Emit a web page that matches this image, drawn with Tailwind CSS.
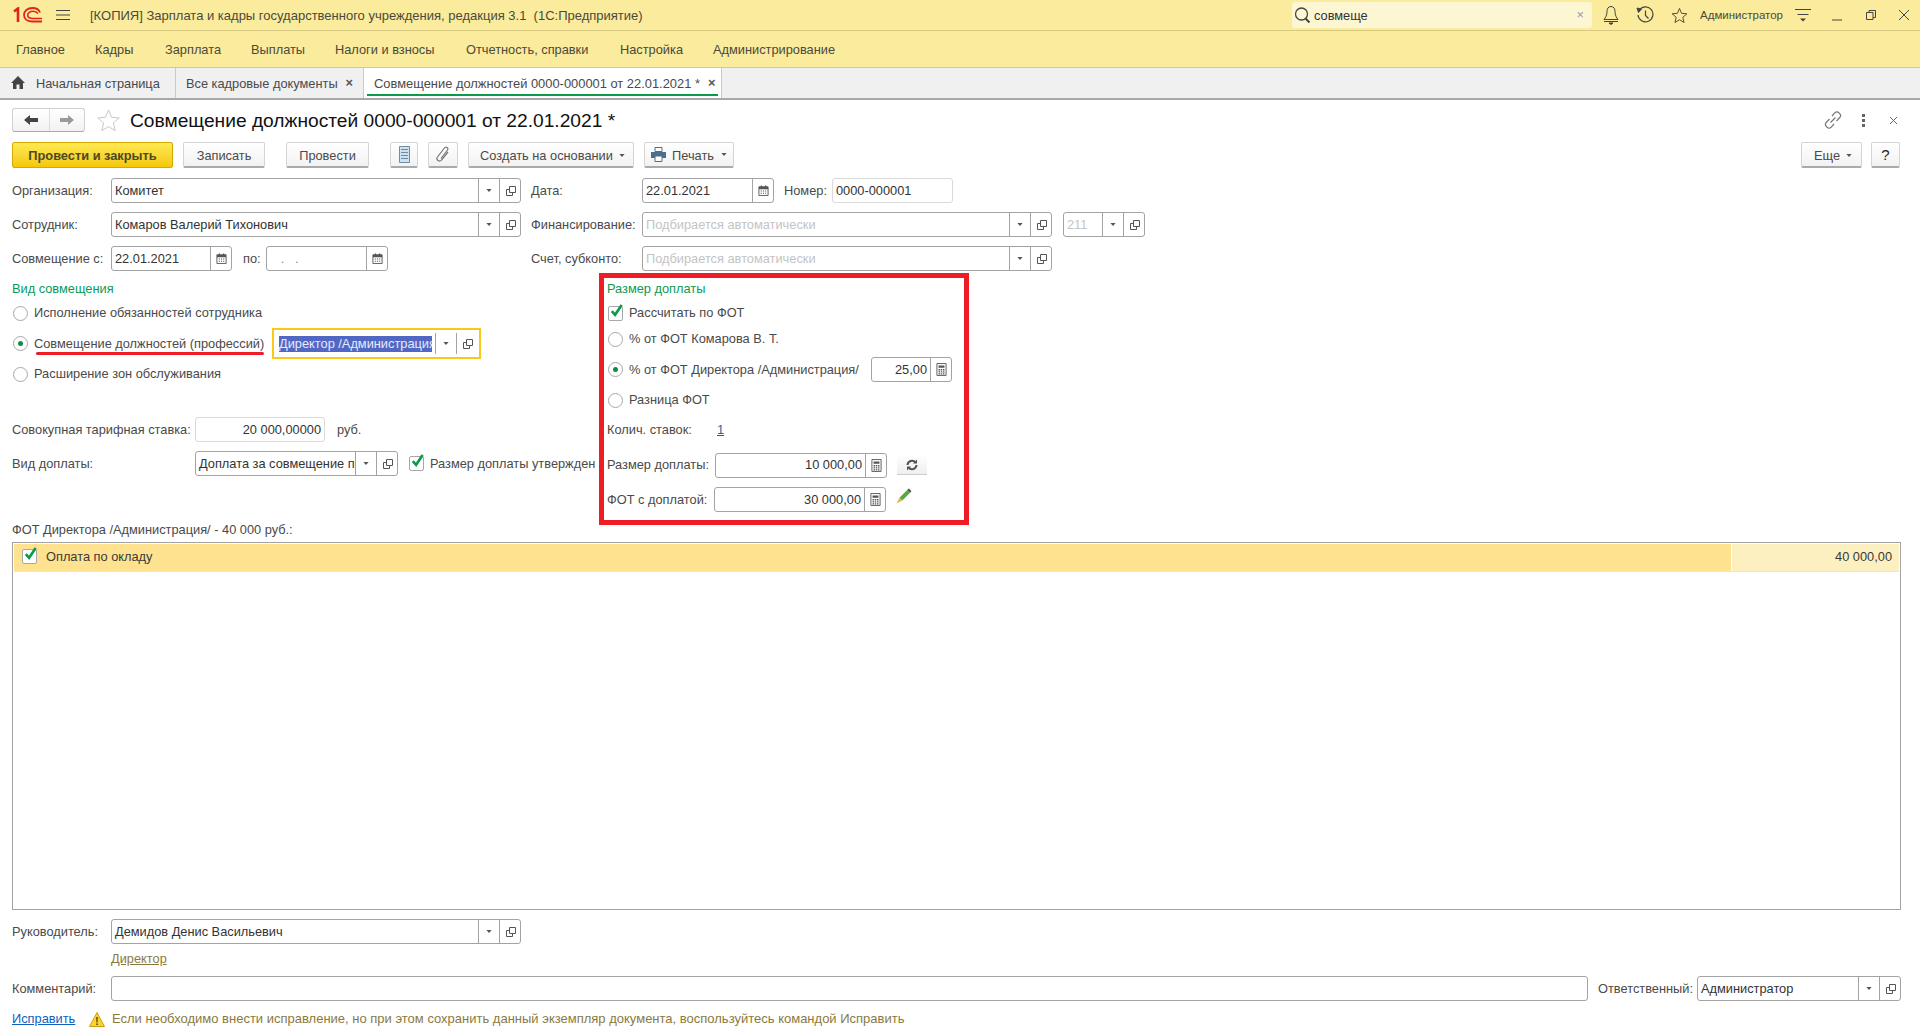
<!doctype html>
<html lang="ru">
<head>
<meta charset="utf-8">
<script src="https://cdn.jsdelivr.net/npm/@tailwindcss/browser@4"></script>
<title>Совмещение должностей</title>
</head>
<body class="w-[1920px] h-[1036px] overflow-hidden bg-white font-['Liberation_Sans',Arial,sans-serif] text-[12.8px] leading-[14px] text-[#4a4a4a]">
<svg class="hidden" width="0" height="0">
  <defs>
    <symbol id="open" viewBox="-1 0 12 12"><path d="M4.500 1.500h6v6h-6zM4.500 4.500h-3v6h6v-3" fill="none" stroke="#555" stroke-width="1"/></symbol>
    <symbol id="arrow" viewBox="0 0 7 4"><path d="M0 0h7L3.500 4z" fill="#555"/></symbol>
    <symbol id="cal" viewBox="0 0 12 12"><path d="M1 2h10v9.500H1z" fill="#fff" stroke="#555"/><path d="M1 2h10v2.500H1zM3 .5h1.500V2H3zM7.500 .5H9V2H7.500z" fill="#555"/><path d="M3 6h1.200v1.200H3zM5.400 6h1.200v1.200H5.400zM7.800 6H9v1.200H7.800zM3 8.400h1.200v1.200H3zM5.400 8.400h1.200v1.200H5.400zM7.800 8.400H9v1.200H7.800z" fill="#555"/></symbol>
    <symbol id="calc" viewBox="0 0 12 14"><path d="M1 .5h10v13H1z" fill="#fff" stroke="#555"/><path d="M2.800 2.500h6.400v2.500H2.800zM2.800 6.500h1.600v1.500H2.800zM5.200 6.500h1.600v1.500H5.200zM7.600 6.500h1.600v1.500H7.600zM2.800 8.800h1.600v1.500H2.800zM5.200 8.800h1.600v1.500H5.200zM7.600 8.800h1.600v1.500H7.600zM2.800 11h1.600v1.500H2.800zM5.200 11h1.600v1.500H5.200zM7.600 11h1.600v1.500H7.600z" fill="#555"/></symbol>
    <symbol id="check" viewBox="0 0 16 16"><path d="M3 7.500l3.500 4L13.500 1" fill="none" stroke="#0a9a4a" stroke-width="2.800"/></symbol>
  </defs>
</svg>

<div class="flex h-[1036px] flex-col">
  <!-- top bar -->
  <header class="flex h-[31px] shrink-0 items-center border-b border-[#d8c981] bg-[#fbeb9d] text-[#4a4a3a]">
    <svg class="ml-[13px] h-[16px] w-[30px]" viewBox="0 0 30 16" fill="none" stroke="#e0231c">
      <path d="M1 4.500L5 1.500V15" stroke-width="2.600"/>
      <path d="M27 5.500C26 2.500 23 1 19.500 1 14.500 1 11 4 11 8s3.500 6.500 8.500 6.500H29" stroke-width="1.800"/>
      <path d="M25 6.500C24 5 22 4.300 20 4.300 17 4.300 14.700 5.800 14.700 8S17 11.500 20 11.500H29" stroke-width="1.600"/>
    </svg>
    <svg class="ml-[13px] h-[12px] w-[14px]" viewBox="0 0 14 12" stroke="#444"><path d="M0 1.500h14M0 6h14M0 10.500h14"/></svg>
    <span class="ml-[20px] whitespace-pre pt-[1px] text-[13px]">[КОПИЯ] Зарплата и кадры государственного учреждения, редакция 3.1  (1С:Предприятие)</span>
    <div class="flex-1"></div>
    <div class="flex h-[26px] w-[300px] items-center rounded-[3px] bg-[#fdf6d3] pl-[2px] text-[#333]">
      <svg class="h-[17px] w-[17px]" viewBox="0 0 17 17" fill="none" stroke="#444" stroke-width="1.300"><circle cx="7.500" cy="7" r="6"/><path d="M11.500 11.500l4 4" stroke-width="2"/></svg>
      <span class="ml-[3px] pt-[1px]">совмеще</span>
      <span class="ml-auto mr-[8px] text-[#999]">×</span>
    </div>
    <div class="ml-[2px] flex h-[30px] w-[34px] items-center justify-center">
      <svg class="h-[20px] w-[16px]" viewBox="0 0 16 20" fill="none" stroke="#444"><path d="M8 1.500c-3 0-4 2.500-4 5 0 4-1.500 6-3 8h14c-1.500-2-3-4-3-8 0-2.500-1-5-4-5zM1 16.500h14"/><path d="M6 18h4l-2 1.500z" fill="#444"/></svg>
    </div>
    <div class="flex h-[30px] w-[34px] items-center justify-center">
      <svg class="h-[18px] w-[18px]" viewBox="0 0 18 18" fill="none" stroke="#444"><path d="M3 4.500A7.500 7.500 0 1 1 2 9M9.500 4.500V9.500l3 3" stroke-width="1.200"/><path d="M1 2l4.500 1-3 3.500z" fill="#444"/></svg>
    </div>
    <div class="flex h-[30px] w-[34px] items-center justify-center">
      <svg class="h-[17px] w-[17px]" viewBox="0 0 18 18" fill="none" stroke="#444"><path d="M9 1.500l2.200 5.200 5.600.5-4.300 3.700 1.300 5.500L9 13.500l-4.800 2.900 1.300-5.500L1.200 7.200l5.600-.5z"/></svg>
    </div>
    <span class="ml-[4px] w-[82px] whitespace-nowrap text-[11.500px]">Администратор</span>
    <div class="ml-[4px] flex h-[30px] w-[34px] items-center justify-center">
      <svg class="h-[14px] w-[16px]" viewBox="0 0 16 14" stroke="#444"><path d="M0 1.500h16M2.500 6.500h11"/><path d="M5 10.500h6L8 13.500z" fill="#444" stroke="none"/></svg>
    </div>
    <div class="flex h-[30px] w-[34px] items-center justify-center">
      <svg class="h-[12px] w-[10px]" viewBox="0 0 10 12" stroke="#444"><path d="M0 11h10"/></svg>
    </div>
    <div class="flex h-[30px] w-[34px] items-center justify-center">
      <svg class="h-[10px] w-[10px]" viewBox="0 0 10 10" fill="none" stroke="#444"><path d="M.5 2.500h6.500v7H.5zM3 2.500V.5h6.500v7H7"/></svg>
    </div>
    <div class="flex h-[30px] w-[32px] items-center justify-center">
      <svg class="h-[12px] w-[12px]" viewBox="0 0 12 12" stroke="#444"><path d="M1 1l10 10M11 1L1 11"/></svg>
    </div>
  </header>

  <!-- menu -->
  <nav class="flex h-[37px] shrink-0 items-center border-b border-[#d8c981] bg-[#fbeb9d] pl-[16px] pt-[2px] text-[#4a4a3a]">
    <span class="w-[79px]">Главное</span>
    <span class="w-[70px]">Кадры</span>
    <span class="w-[86px]">Зарплата</span>
    <span class="w-[84px]">Выплаты</span>
    <span class="w-[131px]">Налоги и взносы</span>
    <span class="w-[154px]">Отчетность, справки</span>
    <span class="w-[93px]">Настройка</span>
    <span>Администрирование</span>
  </nav>

  <!-- tabs -->
  <div class="flex h-[32px] shrink-0 border-b-2 border-[#a8a8a8] bg-[#f0f0f0] text-[#4a4a4a]">
    <div class="flex w-[176px] items-center border-r border-[#c9c9c9] pl-[11px]">
      <svg class="h-[13px] w-[14px] -mt-[1px]" viewBox="0 0 14 13" fill="#444"><path d="M7 0L0 7h2v6h3.500V8.500h3V13H12V7h2z"/></svg>
      <span class="ml-[11px] pt-[1px]">Начальная страница</span>
    </div>
    <div class="flex w-[188px] items-center border-r border-[#c9c9c9] pl-[10px]">
      <span class="pt-[1px]">Все кадровые документы</span>
      <span class="ml-[8px] font-bold text-[#555]">×</span>
    </div>
    <div class="relative flex w-[358px] items-center border-r border-[#c9c9c9] bg-white pl-[10px]">
      <span class="pt-[1px] text-[12.9px]">Совмещение должностей 0000-000001 от 22.01.2021 *</span>
      <span class="ml-[8px] font-bold text-[#555]">×</span>
      <div class="absolute bottom-[2px] left-[3px] right-[3px] h-[2px] bg-[#0a9a4a]"></div>
    </div>
  </div>

  <!-- document -->
  <main class="flex min-h-0 flex-1 flex-col">
    <div class="mt-[8px] flex h-[24px] shrink-0 items-center pl-[12px] pr-[22px]">
      <div class="flex h-[24px] w-[73px] rounded-[3px] border border-[#d0d0d0] border-b-[#aaa] bg-gradient-to-b from-white to-[#f2f2f2]">
        <div class="flex w-[37px] items-center justify-center border-r border-[#ddd]">
          <svg class="h-[10px] w-[14px]" viewBox="0 0 14 10" fill="#444"><path d="M0 5l6-5v3h8v4H6v3z"/></svg>
        </div>
        <div class="flex flex-1 items-center justify-center">
          <svg class="h-[10px] w-[14px]" viewBox="0 0 14 10" fill="#9a9a9a"><path d="M14 5L8 0v3H0v4h8v3z"/></svg>
        </div>
      </div>
      <svg class="ml-[12px] h-[22px] w-[23px]" viewBox="0 0 24 23" fill="none" stroke="#c4c4c4"><path d="M12 1l3.200 7.600 8 .7-6.100 5.300 1.900 8-7-4.200-7 4.200 1.900-8L.8 9.300l8-.7z"/></svg>
      <h1 class="ml-[10px] pt-[1px] text-[19.200px] leading-[24px] text-[#111]">Совмещение должностей 0000-000001 от 22.01.2021 *</h1>
      <svg class="ml-auto h-[18px] w-[18px]" viewBox="0 0 18 18" fill="none" stroke="#777" stroke-width="1.200"><path d="M8 5l3-3.300a2.600 2.600 0 0 1 3.800 0l1 1a2.600 2.600 0 0 1 0 3.800L12.500 10M10 13l-3 3.300a2.600 2.600 0 0 1-3.800 0l-1-1a2.600 2.600 0 0 1 0-3.800L5.500 8M6.500 11.500l5-5"/></svg>
      <div class="ml-[20px] flex flex-col gap-[2px]">
        <div class="h-[3px] w-[3px] bg-[#666]"></div>
        <div class="h-[3px] w-[3px] bg-[#666]"></div>
        <div class="h-[3px] w-[3px] bg-[#666]"></div>
      </div>
      <svg class="ml-[24px] h-[9px] w-[9px]" viewBox="0 0 9 9" stroke="#666"><path d="M1 1l7 7M8 1L1 8"/></svg>
    </div>

    <!-- toolbar -->
    <div class="mt-[10px] flex h-[26px] shrink-0 pl-[12px] pr-[20px]">
      <div class="flex w-[161px] items-center justify-center rounded-[2px] border border-[#d4ab00] bg-gradient-to-b from-[#ffe94f] to-[#f4c800] pt-[2px] font-bold text-[#4a4a20]">Провести и закрыть</div>
      <div class="ml-[10px] flex w-[82px] items-center justify-center rounded-[2px] border border-[#d4d4d4] border-b-2 border-b-[#aaa] bg-gradient-to-b from-white to-[#f2f2f2] pt-[2px]">Записать</div>
      <div class="ml-[21px] flex w-[83px] items-center justify-center rounded-[2px] border border-[#d4d4d4] border-b-2 border-b-[#aaa] bg-gradient-to-b from-white to-[#f2f2f2] pt-[2px]">Провести</div>
      <div class="ml-[21px] flex w-[28px] items-center justify-center rounded-[2px] border border-[#d4d4d4] border-b-2 border-b-[#aaa] bg-gradient-to-b from-white to-[#f2f2f2]">
        <svg class="h-[17px] w-[11px]" viewBox="0 0 11 17"><path d="M.5.500h10v16H.5z" fill="#cfe0ee" stroke="#6b8ea8"/><path d="M2 3.500h7M2 6.500h7M2 9.500h7M2 12.500h7" stroke="#6b8ea8"/></svg>
      </div>
      <div class="ml-[10px] flex w-[30px] items-center justify-center rounded-[2px] border border-[#d4d4d4] border-b-2 border-b-[#aaa] bg-gradient-to-b from-white to-[#f2f2f2]">
        <svg class="h-[17px] w-[14px]" viewBox="0 0 14 17" fill="none" stroke="#777" stroke-width="1.200"><path d="M12 6l-6.500 8a2.500 2.500 0 0 1-4-3l7-9a1.800 1.800 0 0 1 3 2l-6.500 8.500"/></svg>
      </div>
      <div class="ml-[10px] flex w-[166px] items-center justify-center gap-[6px] rounded-[2px] border border-[#d4d4d4] border-b-2 border-b-[#aaa] bg-gradient-to-b from-white to-[#f2f2f2] pl-[3px] pt-[2px]">
        <span>Создать на основании</span>
        <svg class="h-[3px] w-[6px]"><use href="#arrow"/></svg>
      </div>
      <div class="ml-[10px] flex w-[90px] items-center justify-center rounded-[2px] border border-[#d4d4d4] border-b-2 border-b-[#aaa] bg-gradient-to-b from-white to-[#f2f2f2]">
        <svg class="h-[15px] w-[15px]" viewBox="0 0 15 15"><path d="M4 .5h7v4H4z" fill="#fff" stroke="#4c6f8a"/><path d="M0 5h15v6H0z" fill="#4c6f8a"/><path d="M4 9h7v5.500H4z" fill="#fff" stroke="#4c6f8a"/></svg>
        <span class="ml-[6px] pt-[2px]">Печать</span>
        <svg class="ml-[7px] h-[3px] w-[6px]"><use href="#arrow"/></svg>
      </div>
      <div class="ml-auto flex w-[61px] items-center justify-center gap-[6px] rounded-[2px] border border-[#d4d4d4] border-b-2 border-b-[#aaa] bg-gradient-to-b from-white to-[#f2f2f2] pl-[3px] pt-[2px]">
        <span>Еще</span>
        <svg class="h-[3px] w-[6px]"><use href="#arrow"/></svg>
      </div>
      <div class="ml-[9px] flex w-[29px] items-center justify-center rounded-[2px] border border-[#d4d4d4] border-b-2 border-b-[#aaa] bg-gradient-to-b from-white to-[#f2f2f2] text-[15px] text-[#222]">?</div>
    </div>

    <!-- header fields -->
    <div class="mt-[10px] flex h-[25px] shrink-0 items-center pl-[12px]">
      <span class="w-[99px]">Организация:</span>
      <div class="flex h-[25px] w-[410px] rounded-[3px] border border-[#a3a3a3] text-[#333]">
        <div class="flex flex-1 items-center overflow-hidden whitespace-nowrap pl-[3px]">Комитет</div>
        <div class="flex w-[21px] items-center justify-center border-l border-[#a3a3a3]"><svg class="h-[3px] w-[6px]"><use href="#arrow"/></svg></div>
        <div class="flex w-[21px] items-center justify-center border-l border-[#a3a3a3]"><svg class="h-[12px] w-[12px]"><use href="#open"/></svg></div>
      </div>
      <span class="ml-[10px] w-[111px]">Дата:</span>
      <div class="flex h-[25px] w-[132px] rounded-[3px] border border-[#a3a3a3] text-[#333]">
        <div class="flex flex-1 items-center pl-[3px]">22.01.2021</div>
        <div class="flex w-[21px] items-center justify-center border-l border-[#a3a3a3]"><svg class="h-[11px] w-[11px]"><use href="#cal"/></svg></div>
      </div>
      <span class="ml-[10px] w-[48px]">Номер:</span>
      <div class="flex h-[25px] w-[121px] items-center rounded-[3px] border border-[#dadada] pl-[3px] text-[#333]">0000-000001</div>
    </div>

    <div class="mt-[9px] flex h-[25px] shrink-0 items-center pl-[12px]">
      <span class="w-[99px]">Сотрудник:</span>
      <div class="flex h-[25px] w-[410px] rounded-[3px] border border-[#a3a3a3] text-[#333]">
        <div class="flex flex-1 items-center overflow-hidden whitespace-nowrap pl-[3px]">Комаров Валерий Тихонович</div>
        <div class="flex w-[21px] items-center justify-center border-l border-[#a3a3a3]"><svg class="h-[3px] w-[6px]"><use href="#arrow"/></svg></div>
        <div class="flex w-[21px] items-center justify-center border-l border-[#a3a3a3]"><svg class="h-[12px] w-[12px]"><use href="#open"/></svg></div>
      </div>
      <span class="ml-[10px] w-[111px] whitespace-nowrap">Финансирование:</span>
      <div class="flex h-[25px] w-[410px] rounded-[3px] border border-[#a3a3a3] text-[#c4c4c4]">
        <div class="flex flex-1 items-center overflow-hidden whitespace-nowrap pl-[3px]">Подбирается автоматически</div>
        <div class="flex w-[21px] items-center justify-center border-l border-[#a3a3a3]"><svg class="h-[3px] w-[6px]"><use href="#arrow"/></svg></div>
        <div class="flex w-[21px] items-center justify-center border-l border-[#a3a3a3]"><svg class="h-[12px] w-[12px]"><use href="#open"/></svg></div>
      </div>
      <div class="ml-[11px] flex h-[25px] w-[82px] rounded-[3px] border border-[#a3a3a3] text-[#c4c4c4]">
        <div class="flex flex-1 items-center pl-[3px]">211</div>
        <div class="flex w-[21px] items-center justify-center border-l border-[#a3a3a3]"><svg class="h-[3px] w-[6px]"><use href="#arrow"/></svg></div>
        <div class="flex w-[21px] items-center justify-center border-l border-[#a3a3a3]"><svg class="h-[12px] w-[12px]"><use href="#open"/></svg></div>
      </div>
    </div>

    <div class="mt-[9px] flex h-[25px] shrink-0 items-center pl-[12px]">
      <span class="w-[99px] whitespace-nowrap">Совмещение с:</span>
      <div class="flex h-[25px] w-[121px] rounded-[3px] border border-[#a3a3a3] text-[#333]">
        <div class="flex flex-1 items-center pl-[3px]">22.01.2021</div>
        <div class="flex w-[21px] items-center justify-center border-l border-[#a3a3a3]"><svg class="h-[11px] w-[11px]"><use href="#cal"/></svg></div>
      </div>
      <span class="ml-[11px] w-[23px]">по:</span>
      <div class="flex h-[25px] w-[122px] rounded-[3px] border border-[#a3a3a3] text-[#888]">
        <div class="flex flex-1 items-center whitespace-pre pl-[3px]">   .   .</div>
        <div class="flex w-[21px] items-center justify-center border-l border-[#a3a3a3]"><svg class="h-[11px] w-[11px]"><use href="#cal"/></svg></div>
      </div>
      <span class="ml-[143px] w-[111px]">Счет, субконто:</span>
      <div class="flex h-[25px] w-[410px] rounded-[3px] border border-[#a3a3a3] text-[#c4c4c4]">
        <div class="flex flex-1 items-center overflow-hidden whitespace-nowrap pl-[3px]">Подбирается автоматически</div>
        <div class="flex w-[21px] items-center justify-center border-l border-[#a3a3a3]"><svg class="h-[3px] w-[6px]"><use href="#arrow"/></svg></div>
        <div class="flex w-[21px] items-center justify-center border-l border-[#a3a3a3]"><svg class="h-[12px] w-[12px]"><use href="#open"/></svg></div>
      </div>
    </div>

    <!-- two groups -->
    <div class="mt-[2px] flex shrink-0 pl-[12px]">
      <section class="w-[587px] pt-[5px]">
        <div class="flex h-[22px] items-center text-[#0a9a55]">Вид совмещения</div>
        <div class="flex h-[26px] items-center pl-[1px]">
          <span class="h-[15px] w-[15px] rounded-full border border-[#a8a8a8]"></span>
          <span class="ml-[6px]">Исполнение обязанностей сотрудника</span>
        </div>
        <div class="flex h-[35px] items-center pl-[1px]">
          <span class="flex h-[15px] w-[15px] shrink-0 items-center justify-center rounded-full border border-[#a8a8a8]"><span class="h-[5px] w-[5px] rounded-full bg-[#0a8f4a]"></span></span>
          <span class="relative ml-[6px] w-[238px] shrink-0 whitespace-nowrap">Совмещение должностей (профессий)
            <span class="absolute left-[2px] top-[15px] h-[3px] w-[228px] rounded-full bg-[#ee1c25]"></span>
          </span>
          <div class="flex h-[31px] w-[209px] items-center border-2 border-[#fcc719] pl-[5px] text-[#e8e8ff]">
            <div class="h-[16px] w-[153px] shrink-0 overflow-hidden whitespace-nowrap bg-[#5068c4] leading-[16px]">Директор /Администрация/</div>
            <div class="ml-[3px] flex h-[21px] w-[21px] items-center justify-center border-l border-[#a3a3a3]"><svg class="h-[3px] w-[6px]"><use href="#arrow"/></svg></div>
            <div class="flex h-[21px] w-[21px] items-center justify-center border-l border-[#a3a3a3]"><svg class="h-[12px] w-[12px]"><use href="#open"/></svg></div>
          </div>
        </div>
        <div class="flex h-[26px] items-center pl-[1px]">
          <span class="h-[15px] w-[15px] rounded-full border border-[#a8a8a8]"></span>
          <span class="ml-[6px]">Расширение зон обслуживания</span>
        </div>
        <div class="mt-[30px] flex h-[25px] items-center">
          <span class="w-[183px] whitespace-nowrap">Совокупная тарифная ставка:</span>
          <div class="flex h-[25px] w-[130px] items-center justify-end rounded-[3px] border border-[#dadada] pr-[3px] text-[#333]">20 000,00000</div>
          <span class="ml-[12px]">руб.</span>
        </div>
        <div class="mt-[9px] flex h-[25px] items-center">
          <span class="w-[183px]">Вид доплаты:</span>
          <div class="flex h-[25px] w-[203px] rounded-[3px] border border-[#a3a3a3] text-[#333]">
            <div class="flex min-w-0 flex-1 items-center overflow-hidden whitespace-nowrap pl-[3px]">Доплата за совмещение профессий</div>
            <div class="flex w-[21px] shrink-0 items-center justify-center border-l border-[#a3a3a3]"><svg class="h-[3px] w-[6px]"><use href="#arrow"/></svg></div>
            <div class="flex w-[21px] shrink-0 items-center justify-center border-l border-[#a3a3a3]"><svg class="h-[12px] w-[12px]"><use href="#open"/></svg></div>
          </div>
          <span class="relative ml-[11px] h-[15px] w-[15px] rounded-[2px] border border-[#a8a8a8]"><svg class="absolute -top-[3px] left-0 h-[15px] w-[15px]"><use href="#check"/></svg></span>
          <span class="ml-[6px] whitespace-nowrap">Размер доплаты утвержден</span>
        </div>
      </section>

      <section class="h-[252px] w-[370px] border-[5px] border-[#ee1c25] pl-[3px]">
        <div class="flex h-[22px] items-center text-[#0a9a55]">Размер доплаты</div>
        <div class="flex h-[26px] items-center pl-[1px]">
          <span class="relative h-[15px] w-[15px] rounded-[2px] border border-[#a8a8a8]"><svg class="absolute -top-[3px] left-0 h-[15px] w-[15px]"><use href="#check"/></svg></span>
          <span class="ml-[6px]">Рассчитать по ФОТ</span>
        </div>
        <div class="flex h-[26px] items-center pl-[1px]">
          <span class="h-[15px] w-[15px] rounded-full border border-[#a8a8a8]"></span>
          <span class="ml-[6px]">% от ФОТ Комарова В. Т.</span>
        </div>
        <div class="flex h-[35px] items-center pl-[1px]">
          <span class="flex h-[15px] w-[15px] items-center justify-center rounded-full border border-[#a8a8a8]"><span class="h-[5px] w-[5px] rounded-full bg-[#0a8f4a]"></span></span>
          <span class="ml-[6px] w-[242px] whitespace-nowrap">% от ФОТ Директора /Администрация/</span>
          <div class="flex h-[25px] w-[81px] rounded-[3px] border border-[#a3a3a3] text-[#333]">
            <div class="flex flex-1 items-center justify-end pr-[3px]">25,00</div>
            <div class="flex w-[21px] items-center justify-center border-l border-[#a3a3a3]"><svg class="h-[13px] w-[11px]"><use href="#calc"/></svg></div>
          </div>
        </div>
        <div class="flex h-[26px] items-center pl-[1px]">
          <span class="h-[15px] w-[15px] rounded-full border border-[#a8a8a8]"></span>
          <span class="ml-[6px]">Разница ФОТ</span>
        </div>
        <div class="flex h-[34px] items-center">
          <span class="w-[110px]">Колич. ставок:</span>
          <span class="text-[#1f5fa8] underline">1</span>
        </div>
        <div class="flex h-[36px] items-center">
          <span class="w-[108px] whitespace-nowrap">Размер доплаты:</span>
          <div class="flex h-[25px] w-[172px] rounded-[3px] border border-[#a3a3a3] text-[#333]">
            <div class="flex flex-1 items-center justify-end pr-[3px]">10 000,00</div>
            <div class="flex w-[21px] items-center justify-center border-l border-[#a3a3a3]"><svg class="h-[13px] w-[11px]"><use href="#calc"/></svg></div>
          </div>
          <div class="ml-[10px] flex h-[20px] w-[30px] items-center justify-center border-b border-b-[#ccc] bg-gradient-to-b from-white to-[#efefef]">
            <svg class="h-[12px] w-[12px]" viewBox="0 0 12 12" fill="none" stroke="#555" stroke-width="2"><path d="M1.500 6a4.500 4.500 0 0 1 8-2.500M10.500 6a4.500 4.500 0 0 1-8 2.500"/><path d="M11 .5v4H7zM1 11.500v-4h4z" fill="#555" stroke="none"/></svg>
          </div>
        </div>
        <div class="flex h-[33px] items-center">
          <span class="w-[107px] whitespace-nowrap">ФОТ с доплатой:</span>
          <div class="flex h-[25px] w-[172px] rounded-[3px] border border-[#a3a3a3] text-[#333]">
            <div class="flex flex-1 items-center justify-end pr-[3px]">30 000,00</div>
            <div class="flex w-[21px] items-center justify-center border-l border-[#a3a3a3]"><svg class="h-[13px] w-[11px]"><use href="#calc"/></svg></div>
          </div>
          <svg class="ml-[10px] -mt-[8px] h-[16px] w-[16px]" viewBox="0 0 14 14"><path d="M3 8.500L10 1.500l2.500 2.500-7 7z" fill="#5ca83c"/><path d="M10 1.500L11.200.5l2.300 2.300-1 1.200z" fill="#444"/><path d="M3 8.500l2.500 2.500L.5 13.500z" fill="#e8b04a"/></svg>
        </div>
      </section>
    </div>

    <div class="h-[11px] shrink-0 whitespace-nowrap pl-[12px] leading-[10px]">ФОТ Директора /Администрация/ - 40 000 руб.:</div>

    <!-- table -->
    <div class="ml-[12px] mr-[19px] mt-[6px] min-h-0 flex-1 border border-[#a3a3a3] p-[1px] pb-0">
      <div class="flex h-[27px]">
        <div class="flex flex-1 items-center bg-[#fee28f] pb-[2px] pl-[8px] text-[#3a3a3a]">
          <span class="relative h-[15px] w-[15px] rounded-[2px] border border-[#a8a8a8] bg-white"><svg class="absolute -top-[3px] left-0 h-[15px] w-[15px]"><use href="#check"/></svg></span>
          <span class="ml-[9px]">Оплата по окладу</span>
        </div>
        <div class="flex w-[168px] items-center justify-end border-l border-white bg-[#fdf0c0] pb-[2px] pr-[7px] text-[#3a3a3a]">40 000,00</div>
      </div>
      <div class="h-[1px] bg-[#e5e5e5]"></div>
    </div>

    <!-- footer -->
    <div class="mt-[9px] flex h-[25px] shrink-0 items-center pl-[12px]">
      <span class="w-[99px]">Руководитель:</span>
      <div class="flex h-[25px] w-[410px] rounded-[3px] border border-[#a3a3a3] text-[#333]">
        <div class="flex flex-1 items-center pl-[3px]">Демидов Денис Васильевич</div>
        <div class="flex w-[21px] items-center justify-center border-l border-[#a3a3a3]"><svg class="h-[3px] w-[6px]"><use href="#arrow"/></svg></div>
        <div class="flex w-[21px] items-center justify-center border-l border-[#a3a3a3]"><svg class="h-[12px] w-[12px]"><use href="#open"/></svg></div>
      </div>
    </div>
    <div class="mt-[7px] flex h-[16px] shrink-0 items-center pl-[111px] text-[#8a7a3f] underline">Директор</div>
    <div class="mt-[9px] flex h-[25px] shrink-0 items-center pl-[12px] pr-[19px]">
      <span class="w-[99px]">Комментарий:</span>
      <div class="h-[25px] flex-1 rounded-[3px] border border-[#a3a3a3]"></div>
      <span class="ml-[10px] w-[99px] whitespace-nowrap">Ответственный:</span>
      <div class="flex h-[25px] w-[204px] rounded-[3px] border border-[#a3a3a3] text-[#333]">
        <div class="flex flex-1 items-center pl-[3px]">Администратор</div>
        <div class="flex w-[21px] items-center justify-center border-l border-[#a3a3a3]"><svg class="h-[3px] w-[6px]"><use href="#arrow"/></svg></div>
        <div class="flex w-[21px] items-center justify-center border-l border-[#a3a3a3]"><svg class="h-[12px] w-[12px]"><use href="#open"/></svg></div>
      </div>
    </div>
    <div class="mb-[7px] mt-[8px] flex h-[20px] shrink-0 items-center pl-[12px]">
      <span class="w-[77px] text-[#0f5fbf] underline">Исправить</span>
      <svg class="h-[15px] w-[16px]" viewBox="0 0 16 15"><path d="M8 .5L15.500 14.500H.5z" fill="#fbd233" stroke="#c9a010"/><path d="M7.200 5h1.600l-.2 5.500H7.400zM7.200 11.500h1.600V13H7.200z" fill="#5a4a10"/></svg>
      <span class="ml-[7px] text-[13px] text-[#8a7a3f]">Если необходимо внести исправление, но при этом сохранить данный экземпляр документа, воспользуйтесь командой Исправить</span>
    </div>
  </main>
</div>
</body>
</html>
